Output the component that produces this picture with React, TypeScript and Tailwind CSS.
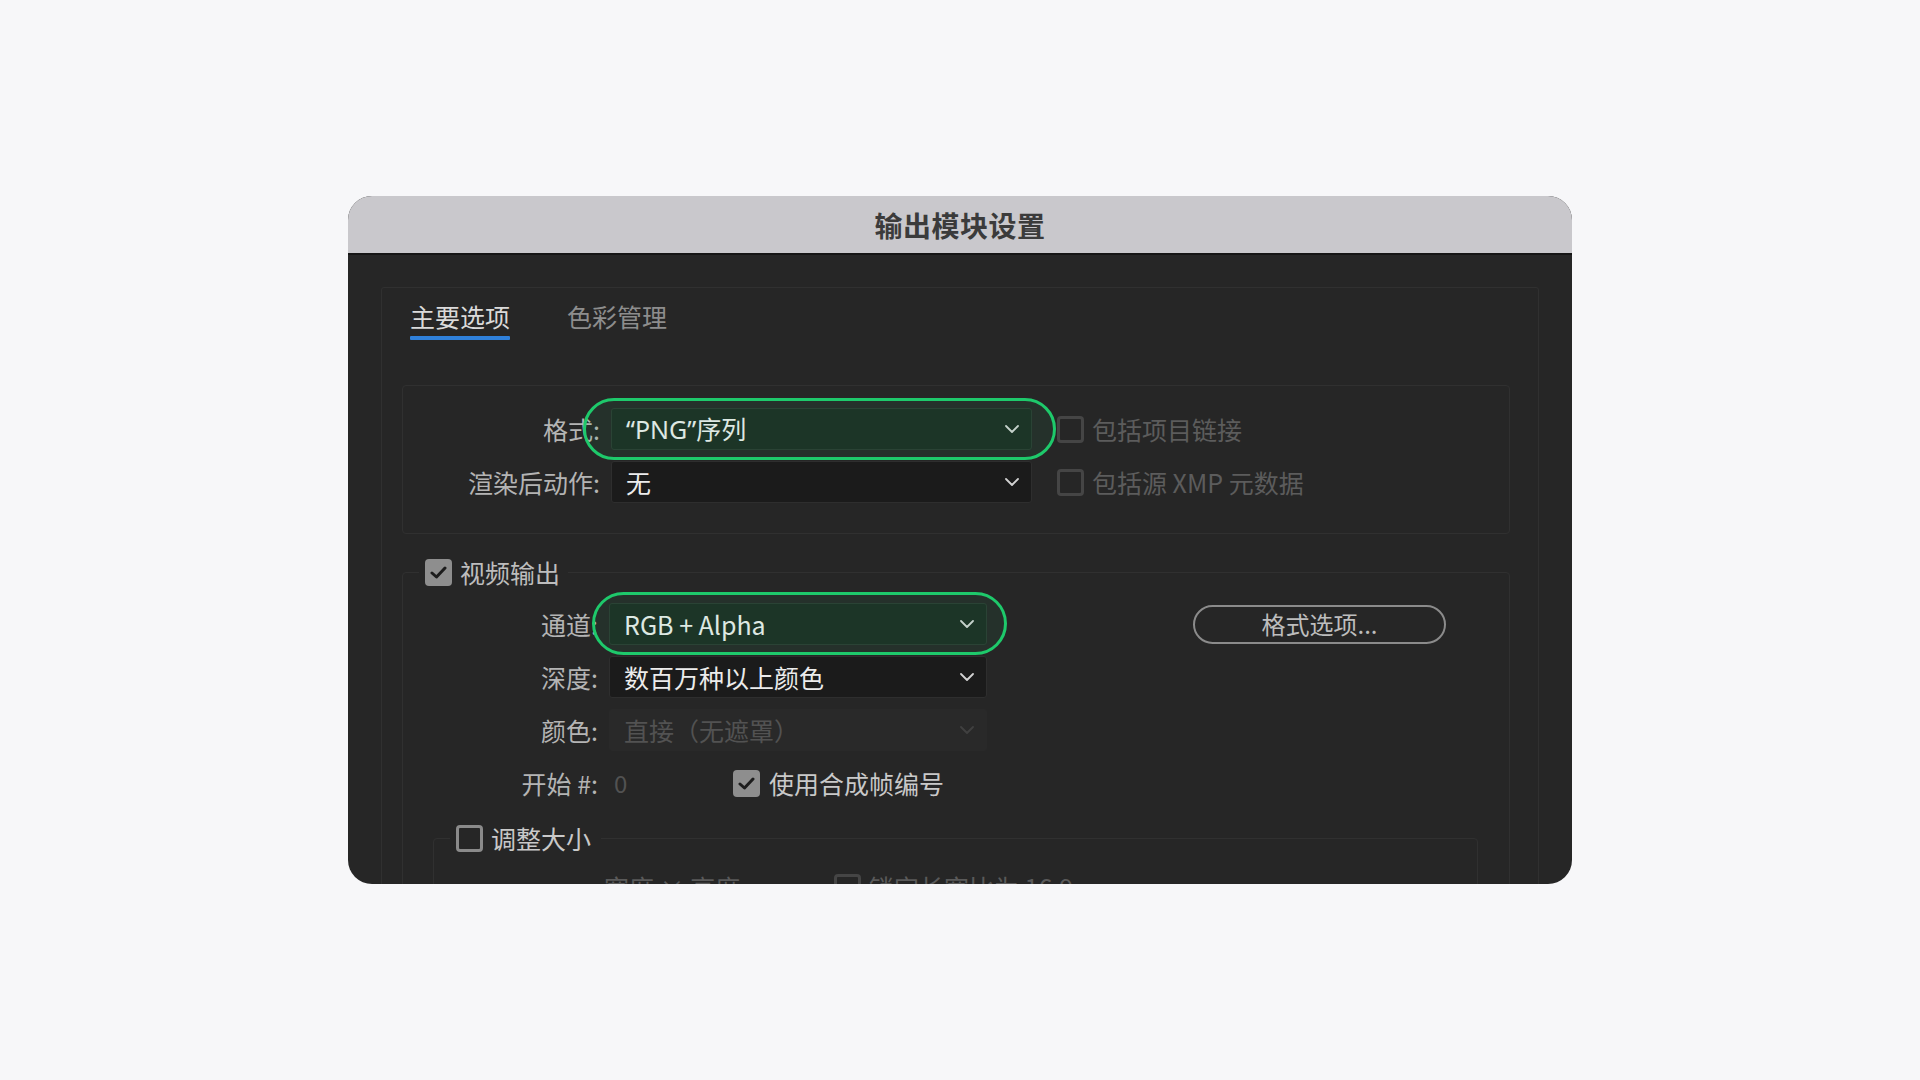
import React from 'react';

const FONT = { fontFamily: '"Noto Sans CJK SC", "Noto Sans", "Liberation Sans", sans-serif' };
const LATIN = { fontFamily: '"Noto Sans", "Liberation Sans", sans-serif' };

function Chevron({ dim }: { dim?: boolean }) {
  return (
    <svg width="14" height="8" viewBox="0 0 14 8" fill="none">
      <polyline points="1,1 7,7 13,1" stroke={dim ? '#404040' : '#d2d2d2'} strokeWidth="1.8" strokeLinecap="round" strokeLinejoin="round" />
    </svg>
  );
}

function Box({ checked, tone = 'dim' }: { checked?: boolean; tone?: 'dim' | 'light' }) {
  if (checked) {
    return (
      <span className="w-[27px] h-[27px] rounded-[4px] bg-[#8e8e8e] flex items-center justify-center shrink-0">
        <svg width="17" height="13" viewBox="0 0 17 13" fill="none">
          <polyline points="2,7 6.5,11 15,2" stroke="#1c1c1c" strokeWidth="3" strokeLinecap="round" strokeLinejoin="round" />
        </svg>
      </span>
    );
  }
  return (
    <span
      className={`w-[27px] h-[27px] rounded-[4px] border-[3px] shrink-0 ${tone === 'light' ? 'border-[#8a8a8a]' : 'border-[#454545]'}`}
    />
  );
}

function Select({ value, w, green, disabled }: { value: React.ReactNode; w: string; green?: boolean; disabled?: boolean }) {
  return (
    <div
      className={`relative z-10 h-[42px] ${w} rounded-[3px] border flex items-center justify-between pl-[14px] pr-[12px] ${
        green
          ? 'bg-[#1c2b22] border-[#2c3a31]'
          : disabled
          ? 'bg-[#292929] border-[#292929]'
          : 'bg-[#1b1b1b] border-[#2e2e2e]'
      }`}
    >
      <span className={`text-[25px] leading-none ${disabled ? 'text-[#525252]' : 'text-[#ececec]'}`}>{value}</span>
      <Chevron dim={disabled} />
    </div>
  );
}

function Label({ text, w }: { text: string; w: string }) {
  return <span className={`${w} text-right text-[25px] leading-none text-[#b4b4b4] shrink-0`}>{text}</span>;
}

export default function App() {
  return (
    <div className="w-full h-screen bg-[#f7f7f9] flex items-center justify-center" style={FONT}>
      <div className="w-[1224px] h-[688px] rounded-[24px] overflow-hidden flex flex-col bg-[#262626]">
        <div className="h-[59px] shrink-0 bg-[#c9c8cc] border-b-2 border-[#161616] flex items-center justify-center">
          <span className="text-[28px] font-bold text-[#3b3b3b] tracking-[0.5px]">输出模块设置</span>
        </div>

        <div className="flex-1 px-[33px] pt-[32px]">
          <div className="h-[700px] border border-[#303030] rounded-[3px] pl-[20px] pr-[28px]">
            {/* tabs */}
            <div className="flex gap-[57px] ml-[8px] mt-[11px]">
              <div className="flex flex-col">
                <span className="text-[25px] leading-[34px] text-[#dadada]">主要选项</span>
                <span className="mt-[3px] h-[4px] bg-[#2f80da] rounded-[1px]" />
              </div>
              <span className="text-[25px] leading-[34px] text-[#8d8d8d]">色彩管理</span>
            </div>

            {/* format group */}
            <div className="mt-[45px] h-[149px] border border-[#303030] rounded-[4px] pt-[22px] flex flex-col gap-[11px]">
              <div className="flex items-center">
                <Label text="格式:" w="w-[197px]" />
                <div className="relative ml-[11px]">
                  <div className="absolute z-20 -left-[28px] -right-[24px] -top-[10px] -bottom-[10px] rounded-full border-[3px] border-[#1ec96b] bg-[#1ec96b]/[0.07]" />
                  <Select
                    value={
                      <>
                        <span style={LATIN}>“PNG”</span>序列
                      </>
                    }
                    w="w-[421px]"
                    green
                  />
                </div>
                <div className="ml-[25px] flex items-center gap-[8px]">
                  <Box />
                  <span className="text-[25px] leading-none text-[#5c5c5c]">包括项目链接</span>
                </div>
              </div>
              <div className="flex items-center">
                <Label text="渲染后动作:" w="w-[197px]" />
                <div className="ml-[11px]">
                  <Select value="无" w="w-[421px]" />
                </div>
                <div className="ml-[25px] flex items-center gap-[8px]">
                  <Box />
                  <span className="text-[25px] leading-none text-[#5c5c5c]">包括源 XMP 元数据</span>
                </div>
              </div>
            </div>

            {/* video output */}
            <fieldset className="mt-[22px] border border-[#303030] rounded-[4px] h-[400px]">
              <legend className="ml-[16px] px-[6px] pr-[8px]">
                <span className="flex items-center gap-[8px] h-[32px]">
                  <Box checked />
                  <span className="text-[25px] leading-none text-[#bdbdbd]">视频输出</span>
                </span>
              </legend>

              <div className="pt-[15px] flex flex-col gap-[11px]">
                <div className="flex items-center">
                  <Label text="通道:" w="w-[195px]" />
                  <div className="relative ml-[11px]">
                    <div className="absolute z-20 -left-[17px] -right-[20px] -top-[11px] -bottom-[10px] rounded-full border-[3px] border-[#1ec96b] bg-[#1ec96b]/[0.07]" />
                    <Select value="RGB + Alpha" w="w-[378px]" green />
                  </div>
                  <button className="ml-[206px] w-[253px] h-[39px] rounded-full border-2 border-[#8b8b8b] text-[24px] leading-none text-[#bdbdbd] flex items-center justify-center">
                    格式选项...
                  </button>
                </div>
                <div className="flex items-center">
                  <Label text="深度:" w="w-[195px]" />
                  <div className="ml-[11px]">
                    <Select value="数百万种以上颜色" w="w-[378px]" />
                  </div>
                </div>
                <div className="flex items-center">
                  <Label text="颜色:" w="w-[195px]" />
                  <div className="ml-[11px]">
                    <Select value="直接（无遮罩）" w="w-[378px]" disabled />
                  </div>
                </div>
                <div className="flex items-center h-[42px]">
                  <Label text="开始 #:" w="w-[195px]" />
                  <span className="ml-[16px] w-[119px] text-[24px] leading-none text-[#525252]">0</span>
                  <div className="flex items-center gap-[9px]">
                    <Box checked />
                    <span className="text-[25px] leading-none text-[#c9c9c9]">使用合成帧编号</span>
                  </div>
                </div>
              </div>

              {/* resize */}
              <fieldset className="mt-[18px] ml-[30px] mr-[31px] border border-[#303030] rounded-[4px] h-[200px]">
                <legend className="ml-[16px] px-[6px] pr-[10px]">
                  <span className="flex items-center gap-[8px] h-[32px]">
                    <Box tone="light" />
                    <span className="text-[25px] leading-none text-[#c9c9c9]">调整大小</span>
                  </span>
                </legend>
                <div className="pt-[20px] flex items-center">
                  <span className="ml-[170px] w-[230px] text-[25px] leading-none text-[#5a5a5a]">宽度 × 高度</span>
                  <div className="flex items-center gap-[8px]">
                    <Box />
                    <span className="text-[25px] leading-none text-[#5a5a5a]">锁定长宽比为 16:9</span>
                  </div>
                </div>
              </fieldset>
            </fieldset>
          </div>
        </div>
      </div>
    </div>
  );
}
